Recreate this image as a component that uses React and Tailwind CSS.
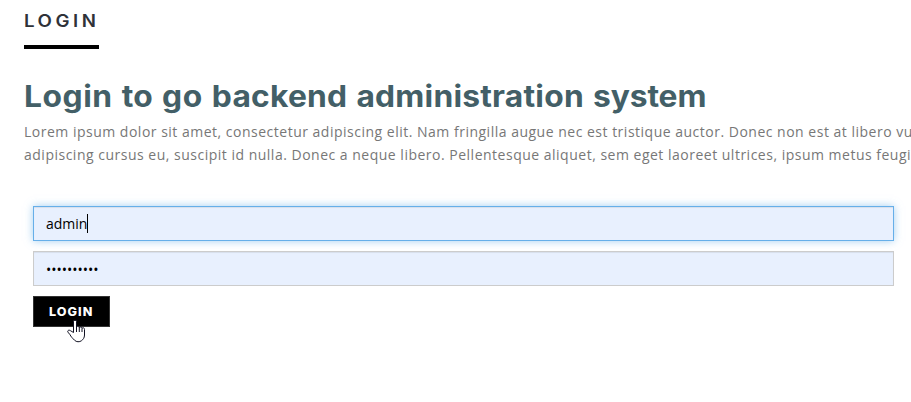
export default function App() {
  return (
    <main className="h-[402px] w-full overflow-hidden bg-white pl-6 font-['Open_Sans',sans-serif]">
      <div className="flex h-[49px] w-[75px] flex-col justify-end border-b-4 border-black">
        <h2 className="mb-[13px] origin-left scale-x-[1.1] whitespace-nowrap font-['Inter',sans-serif] text-[17px] leading-[22px] font-semibold tracking-[3.2px] text-[#2f3238]">
          LOGIN
        </h2>
      </div>
      <h1 className="mt-[29px] w-fit origin-left scale-x-[1.06] whitespace-nowrap font-['Inter',sans-serif] text-[30px] leading-[37px] font-bold tracking-[0.2px] text-[#435f67] [word-spacing:1.2px]">
        <span className="tracking-[0.5px]">Login</span> to <span className="tracking-[0.6px]">go</span> backend administration{' '}
        <span className="tracking-[-0.1px]">system</span>
      </h1>
      <p className="mt-[5px] whitespace-nowrap text-[14px] leading-[23px] tracking-[0.5px] text-[#777777]">
        Lorem ipsum dolor sit amet, consectetur adipiscing elit. Nam fringilla augue nec est tristique auctor. Donec non est at libero vu
        <br />
        adipiscing cursus eu, suscipit id nulla. Donec a neque libero. Pellentesque aliquet, sem eget laoreet ultrices, ipsum metus feugi
      </p>
      <form className="mt-10 ml-[9px] w-[861px]">
        <div className="flex h-[35px] items-center border border-[#66afe9] bg-[#e8f0fe] pl-3 text-[14px] text-black shadow-[inset_0_1px_1px_rgba(0,0,0,0.075),0_0_8px_rgba(102,175,233,0.6)]">
          <span>admin</span>
          <span className="h-[19px] w-px bg-black" />
        </div>
        <div className="mt-[10px] flex h-[35px] items-center border border-[#cccccc] bg-[#e8f0fe] pt-[2px] pl-3 text-[14px] text-black shadow-[inset_0_1px_1px_rgba(0,0,0,0.075)]">
          <span>••••••••••</span>
        </div>
        <div className="relative mt-[10px] w-[77px]">
          <button type="button" className="flex h-[31px] w-full items-center justify-center border border-[#333333] bg-black font-['Inter',sans-serif] text-[12px] font-extrabold tracking-[1px] text-white">
            <span className="scale-x-[1.05]">LOGIN</span>
          </button>
          <svg className="absolute top-[23px] left-[34px]" width="19" height="25" viewBox="0 0 19 25" fill="white" stroke="#111122" strokeWidth="1" strokeLinejoin="round">
            <path d="M6.5 13.5V2.5C6.5 .8 9.5.8 9.5 2.5V8C10.2 6.8 12.2 7 12.2 8.7C13 7.4 15 7.8 15 9.4C15.9 8.2 17.5 8.7 17.5 10.5V16C17.5 19 16 20.5 14.5 21.7C12.5 23.2 9.5 23.2 7.5 21.2C5.5 19.2 4 17.7 3 15.7L1 13.2C0 11.6 2 10.5 3.5 11.7Z" />
            <path d="M9.5 8V13M12.3 8.7V13M15 9.4V13" fill="none" />
          </svg>
        </div>
      </form>
    </main>
  );
}
